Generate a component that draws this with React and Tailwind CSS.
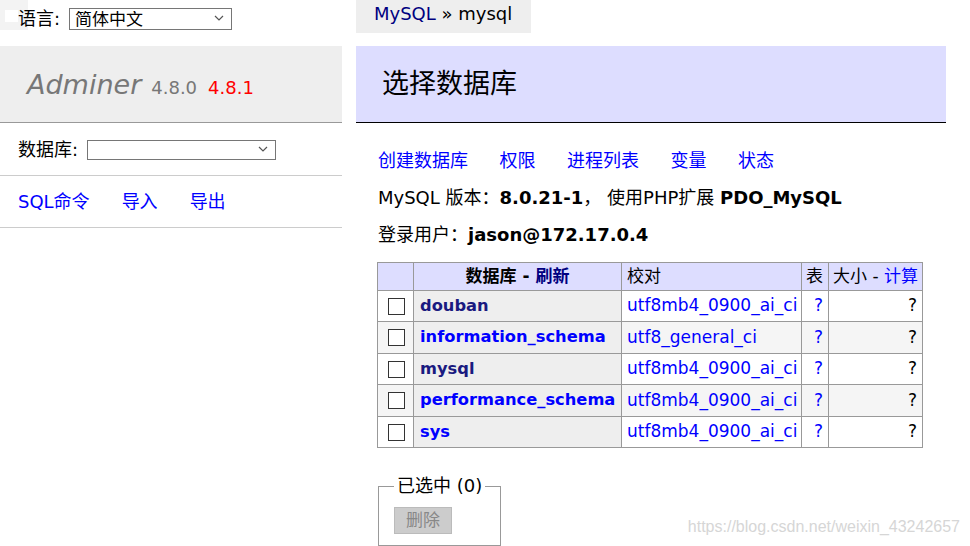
import React from "react";

const dbs = [
  { name: "douban", coll: "utf8mb4_0900_ai_ci", visited: true },
  { name: "information_schema", coll: "utf8_general_ci" },
  { name: "mysql", coll: "utf8mb4_0900_ai_ci", visited: true },
  { name: "performance_schema", coll: "utf8mb4_0900_ai_ci" },
  { name: "sys", coll: "utf8mb4_0900_ai_ci" },
];

function Chevron() {
  return (
    <svg
      className="pointer-events-none absolute right-[8px] top-1/2 -translate-y-1/2"
      width="10"
      height="6"
      viewBox="0 0 10 6"
      fill="none"
    >
      <path d="M1 1l4 4 4-4" stroke="#555" strokeWidth="1.2" />
    </svg>
  );
}

function FakeSelect({ width, height, value }) {
  return (
    <div className="relative" style={{ width }}>
      <select
        className="w-full appearance-none border border-[#767676] bg-white pl-[5px] text-[17px] leading-none text-black outline-none"
        style={{ height }}
        defaultValue={value}
      >
        <option value={value}>{value}</option>
      </select>
      <Chevron />
    </div>
  );
}

export default function App() {
  return (
    <div className="relative h-[546px] w-[970px] overflow-hidden bg-white font-['DejaVu_Sans','Noto_Sans_CJK_SC',sans-serif] text-[18px] text-black">
      {/* leftover patch in the top-left corner */}
      <div className="absolute left-0 top-0 h-[30px] w-[28px] bg-[#f3f3f3]">
        <div className="ml-[5px] mt-[10px] h-[12px] w-[13px] bg-white" />
      </div>

      <div className="flex">
        <aside className="relative w-[342px] shrink-0">
          <div className="mb-[10px] flex h-[36px] items-center pl-[18px]">
            <span>语言:</span>
            <div className="ml-[9px]">
              <FakeSelect width={163} height={22} value="简体中文" />
            </div>
          </div>

          <div className="box-border flex h-[77px] items-baseline border-b border-[#999] bg-[#eee] pl-[27px] pt-[25px] leading-none">
            <span className="text-[27px] italic text-[#777]">Adminer</span>
            <span className="ml-[10px] text-[18px] text-[#777]">4.8.0</span>
            <span className="ml-[11px] text-[18px] text-[#f00]">4.8.1</span>
          </div>

          <div className="box-border flex h-[53px] items-center border-b border-[#ccc] pl-[18px]">
            <span>数据库:</span>
            <div className="ml-[9px]">
              <FakeSelect width={189} height={20} value="" />
            </div>
          </div>

          <div className="box-border flex h-[52px] items-center gap-[32px] border-b border-[#ccc] pl-[18px] text-[#00f]">
            <a>SQL命令</a>
            <a>导入</a>
            <a>导出</a>
          </div>
        </aside>

        <main className="ml-[14px] w-[590px]">
          <div className="h-[33px] w-[175px] bg-[#eee] pl-[18px] leading-[28px]">
            <a className="text-[#000080]">MySQL</a> » mysql
          </div>

          <h2 className="mt-[13px] box-border flex h-[77px] items-center border-b border-black bg-[#ddf] pl-[26px] text-[27px] font-normal">
            选择数据库
          </h2>

          <div className="mt-[19px] pl-[22px] leading-[37px]">
            <div className="flex gap-[31.5px] text-[#00f]">
              <a>创建数据库</a>
              <a>权限</a>
              <a>进程列表</a>
              <a>变量</a>
              <a>状态</a>
            </div>
            <div>
              MySQL 版本：<b>8.0.21-1</b>， 使用PHP扩展 <b>PDO_MySQL</b>
            </div>
            <div>
              登录用户：<b>jason@172.17.0.4</b>
            </div>
          </div>

          <table className="ml-[21px] mt-[9px] w-[545px] table-fixed border-collapse text-[17px]">
            <colgroup>
              <col className="w-[36px]" />
              <col className="w-[208px]" />
              <col className="w-[180px]" />
              <col className="w-[27px]" />
              <col className="w-[94px]" />
            </colgroup>
            <thead>
              <tr className="h-[28px] bg-[#ddf]">
                <td className="border border-[#999]"></td>
                <th className="border border-[#999] px-[5px] text-center font-bold">
                  数据库 - <a className="text-[#000080]">刷新</a>
                </th>
                <td className="border border-[#999] px-[5px]">校对</td>
                <td className="border border-[#999] px-[4px]">表</td>
                <td className="whitespace-nowrap border border-[#999] px-[4px]">
                  大小 - <a className="text-[#00f]">计算</a>
                </td>
              </tr>
            </thead>
            <tbody>
              {dbs.map((db, i) => {
                const even = i % 2 === 1;
                const td = `border border-[#999] px-[5px] ${even ? "bg-[#f5f5f5]" : "bg-white"}`;
                return (
                  <tr key={db.name} className={even ? "h-[32px]" : "h-[31px]"}>
                    <td className={td}>
                      <div className="ml-[5px] h-[17px] w-[17px] border border-[#333] bg-white" />
                    </td>
                    <th
                      className={`whitespace-nowrap border border-[#999] bg-[#eee] px-[6px] text-left text-[16.3px] font-bold ${
                        db.visited ? "text-[#1a1a80]" : "text-[#00f]"
                      }`}
                    >
                      {db.name}
                    </th>
                    <td className={`${td} whitespace-nowrap text-[#00f]`}>{db.coll}</td>
                    <td className={`${td} text-right text-[#00f]`}>?</td>
                    <td className={`${td} text-right`}>?</td>
                  </tr>
                );
              })}
            </tbody>
          </table>

          <fieldset className="ml-[22px] mt-[26px] w-[123px] border border-[#999] px-[15px] pb-[11px]">
            <legend className="whitespace-nowrap px-[3px] leading-[24px]">已选中 (0)</legend>
            <button className="mt-[9px] h-[27px] w-[58px] border border-[#bbb] bg-[#ccc] text-[17px] text-[#888]">
              删除
            </button>
          </fieldset>
        </main>
      </div>

      <div className="absolute bottom-[9px] right-[10px] font-['Liberation_Sans',sans-serif] text-[16px] leading-[20px] text-[#d6d6d6]">
        https://blog.csdn.net/weixin_43242657
      </div>
    </div>
  );
}
